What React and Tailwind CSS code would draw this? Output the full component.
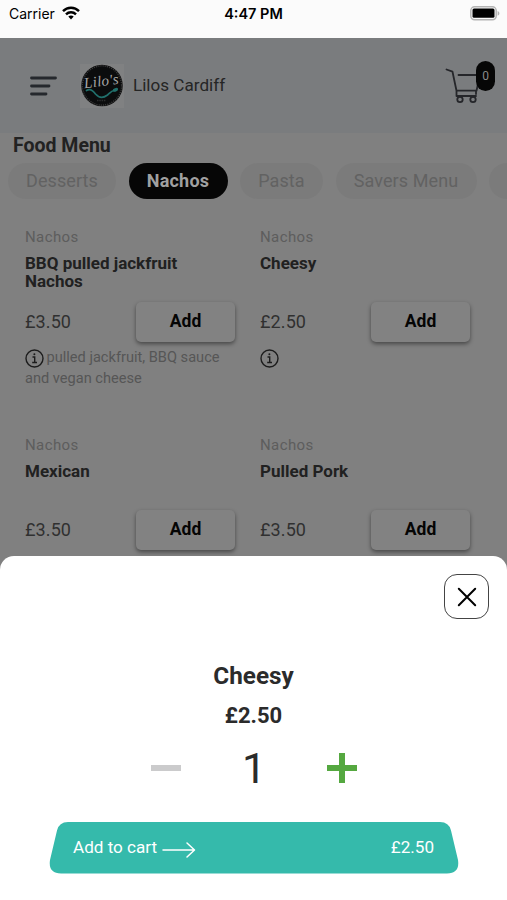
import React from 'react';

const categories = [
  { name: 'Desserts', width: 'w-[108px]' },
  { name: 'Nachos', width: 'w-[99px]', active: true },
  { name: 'Pasta', width: 'w-[83px]' },
  { name: 'Savers Menu', width: 'w-[141px]' },
];

const products = [
  { name: 'BBQ pulled jackfruit Nachos', price: '£3.50', info: 'pulled jackfruit, BBQ sauce and vegan cheese' },
  { name: 'Cheesy', price: '£2.50', info: '' },
  { name: 'Mexican', price: '£3.50', info: '' },
  { name: 'Pulled Pork', price: '£3.50', info: '' },
];

const StatusBar = () => (
  <div className="grid h-[38px] shrink-0 grid-cols-3 items-start bg-[#fbfbfb] pr-[7px] pl-[9px] font-['Inter',sans-serif] text-black">
    <div className="flex items-center gap-[7px] pt-[4px]">
      <span className="text-[14px] leading-[20px]">Carrier</span>
      <svg className="-mt-[2px]" width="18" height="14" viewBox="0 0 18 14" fill="none" stroke="currentColor" strokeWidth="2.4">
        <path d="M1 5.2C5.4 0.6 12.6 0.6 17 5.2" />
        <path d="M4 8.4c2.8-2.8 7.2-2.8 10 0" />
        <path d="M6.3 10.6c1.5-1.5 3.9-1.5 5.4 0L9 13.5z" fill="currentColor" stroke="none" />
      </svg>
    </div>
    <span className="mr-[2px] pt-[4px] text-center text-[14.5px] leading-[20px] font-semibold">4:47 PM</span>
    <svg className="mt-[6px] justify-self-end" width="31" height="15" viewBox="0 0 31 15">
      <rect x="1.8" y="0.8" width="25.4" height="13" rx="3.8" fill="#fbfbfb" stroke="#b4b4b4" strokeWidth="1.5" />
      <rect x="3.5" y="2.6" width="22" height="9.2" rx="1.5" fill="#000" />
      <path d="M28.6 5c2.4 1 2.4 3.8 0 4.8z" fill="#b4b4b4" />
    </svg>
  </div>
);

const Logo = () => (
  <svg className="bg-[#808182]" width="44" height="44" viewBox="0 0 44 44">
    <circle cx="22" cy="21.5" r="20" fill="#0b0c0d" stroke="#111" strokeWidth="1.5" />
    <circle cx="22" cy="21.5" r="19.6" fill="none" stroke="#3c3d3e" strokeWidth="1.4" strokeDasharray="1 1.2" />
    <text x="22" y="22" textAnchor="middle" transform="rotate(-7 22 22)" fill="#a5a5a5" fontFamily="Liberation Serif, serif" fontStyle="italic" fontSize="15" letterSpacing="0.3">
      Lilo's
    </text>
    <path d="M6.5 26.5c4-2.5 6.500 0 9 3.500 3.500 4 8 4 12 1 3-2.500 4-4.500 7-4.500" fill="none" stroke="#21706c" strokeWidth="1.7" strokeLinecap="round" />
    <ellipse cx="35.5" cy="26" rx="2.8" ry="1.7" fill="#21706c" transform="rotate(-20 35 26)" />
    <path d="M17 36.5h9" stroke="#2c2d2e" strokeWidth="1.5" strokeDasharray="1.5 0.8" />
  </svg>
);

const Header = () => (
  <header className="flex h-[95px] shrink-0 items-center bg-[#7a7c7e] pl-[28px] pr-[12px]">
    <svg width="30" height="24" viewBox="0 0 30 24" stroke="#25282d" strokeWidth="2.8" strokeLinecap="round">
      <path d="M3.5 4h24M3.5 12h17.5M3.5 20h14.5" />
    </svg>
    <div className="ml-[22px]">
      <Logo />
    </div>
    <h1 className="ml-[9px] pb-[2px] text-[17.1px] leading-[22px] text-[#252525]">Lilos Cardiff</h1>
    <div className="relative ml-auto h-[44px] w-[50px]">
      <svg width="50" height="44" viewBox="0 0 50 44" fill="none" stroke="#25262a" strokeWidth="1.8" strokeLinecap="round" strokeLinejoin="round">
        <path d="M1.500 5.500l6 2.200 4 19h20l4-18M13.500 11h22M11.500 27v5h19.500M31 27v3" />
        <circle cx="15" cy="35.5" r="2.7" />
        <circle cx="28" cy="35.5" r="2.7" />
      </svg>
      <span className="absolute -top-[3px] right-0 flex h-[30px] w-[19px] items-center justify-center rounded-full bg-[#060606] text-[12px] text-[#898989]">
        0
      </span>
    </div>
  </header>
);

const InfoIcon = () => (
  <svg className="mr-[3px] -ml-[0.5px] inline-block align-[-6px]" width="19" height="19" viewBox="0 0 19 19" fill="none" stroke="#1c1c1c" strokeWidth="1.4">
    <circle cx="9.5" cy="9.5" r="8.5" />
    <path d="M7.5 8h2.2v5.3M7.2 13.5h4.8" />
    <circle cx="9.4" cy="5.2" r="1" fill="#1c1c1c" stroke="none" />
  </svg>
);

const ProductCard = ({ product }) => (
  <div className="h-[208px] w-[210px]">
    <p className="text-[15px] leading-[20px] tracking-[0.4px] text-[#5d5d5d]">Nachos</p>
    <h3 className="mt-[7px] h-[36px] w-[180px] text-[17px] leading-[18px] font-bold text-[#212121]">{product.name}</h3>
    <div className="mt-[11px] flex h-[41px] items-center justify-between">
      <span className="text-[18px] tracking-[0.1px] text-[#303030]">{product.price}</span>
      <button className="h-[40px] w-[99px] rounded-[5px] bg-[#828282] text-[17.5px] font-bold text-[#050505] shadow-[0_2px_4px_rgba(0,0,0,0.45)]">
        Add
      </button>
    </div>
    <p className="mt-[5px] w-[205px] text-[14.6px] leading-[21px] text-[#565656]">
      <InfoIcon />
      {product.info}
    </p>
  </div>
);

const Menu = () => (
  <main className="h-[423px] shrink-0 overflow-hidden">
    <h2 className="ml-[13px] pt-[2px] text-[19.5px] leading-[22px] font-bold text-[#222]">Food Menu</h2>
    <div className="mt-[6px] ml-[8px] flex gap-[12.5px] overflow-hidden">
      {categories.map((category) => (
        <span
          key={category.name}
          className={`flex h-[36px] shrink-0 items-center justify-center rounded-full pb-[2px] text-[18px] ${category.width} ${
            category.active ? 'bg-[#060606] font-bold tracking-[0.2px] text-[#a0a0a0]' : 'bg-[#7b7b7b] tracking-[0.1px] text-[#626262]'
          }`}
        >
          {category.name}
        </span>
      ))}
      {/* next category peeking in from the right */}
      <span className="h-[36px] w-[84px] shrink-0 rounded-full bg-[#7b7b7b]" />
    </div>
    <div className="mt-[28px] ml-[25px] grid grid-cols-[235px_211px]">
      {products.map((product) => (
        <ProductCard key={product.name} product={product} />
      ))}
    </div>
  </main>
);

const CartSheet = () => (
  <section className="flex h-[344px] shrink-0 flex-col items-center rounded-t-[14px] bg-white text-[#2b2b2b]">
    <button className="mt-[18px] mr-[18px] flex h-[45px] w-[45px] items-center justify-center self-end rounded-[13px] border-[1.5px] border-[#444]">
      <svg width="20" height="20" viewBox="0 0 20 20" stroke="#000" strokeWidth="2" strokeLinecap="round">
        <path d="M1.8 1.8l16.4 16.4M18.2 1.8L1.8 18.2" />
      </svg>
    </button>
    <h2 className="mt-[43px] text-[24.3px] leading-[28px] font-bold">Cheesy</h2>
    <p className="mt-[13px] text-[22px] leading-[26px] font-bold">£2.50</p>
    <div className="mt-[14px] flex h-[50px] w-[206px] items-center justify-between">
      <span className="h-[6px] w-[30px] bg-[#cbcbcc]" />
      <span className="text-[43px] leading-[50px]">1</span>
      <svg className="-mr-px" width="30" height="30" viewBox="0 0 30 30" stroke="#55a840" strokeWidth="6">
        <path d="M15 0v30M0 15h30" />
      </svg>
    </div>
    <button className="relative mt-[28px] flex h-[54px] w-[410px] items-center justify-between px-[24.5px] text-[17.1px] text-white">
      <svg className="absolute inset-0" width="410" height="54" viewBox="0 0 410 54">
        <path
          d="M19 1H391Q400 1 402 9.500L409 39Q411 52.500 398 52.500H12Q-1 52.500 1 39L8 9.500Q10 1 19 1Z"
          fill="#35baab"
        />
      </svg>
      <span className="relative flex items-center gap-[5px]">
        Add to cart
        <svg className="mt-[4px]" width="34" height="18" viewBox="0 0 34 18" fill="none" stroke="currentColor" strokeWidth="1.5" strokeLinecap="round" strokeLinejoin="round">
          <path d="M1 9h31M25 2l7.500 7-7.500 7" />
        </svg>
      </span>
      <span className="relative">£2.50</span>
    </button>
  </section>
);

const App = () => {
  return (
    <div className="flex h-[900px] w-[507px] flex-col overflow-hidden bg-[#808080] font-['Roboto',sans-serif]">
      <StatusBar />
      <Header />
      <Menu />
      <CartSheet />
    </div>
  );
};

export default App;
